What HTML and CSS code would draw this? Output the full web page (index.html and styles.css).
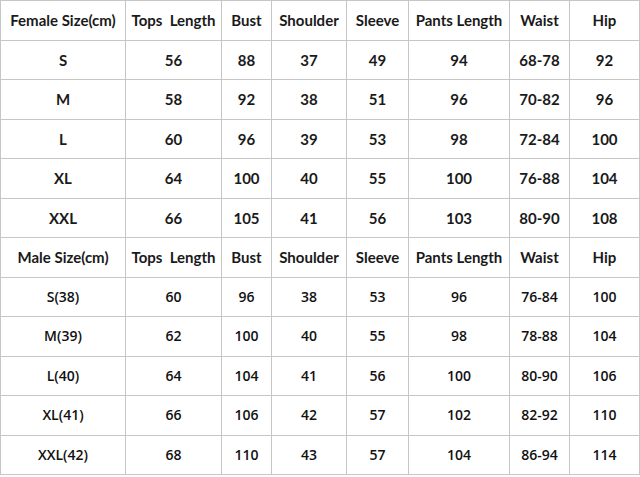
FILE: index.html
```html
<!DOCTYPE html>
<html>
<head>
<meta charset="utf-8">
<link rel="stylesheet" href="styles.css">
</head>
<body>
<table class="size-table">
  <colgroup>
    <col class="c1"><col class="c2"><col class="c3"><col class="c4"><col class="c5"><col class="c6"><col class="c7"><col class="c8">
  </colgroup>
  <tbody>
    <tr class="head"><td>Female Size(cm)</td><td>Tops&nbsp; Length</td><td>Bust</td><td>Shoulder</td><td>Sleeve</td><td>Pants Length</td><td>Waist</td><td>Hip</td></tr>
    <tr><td>S</td><td>56</td><td>88</td><td>37</td><td>49</td><td>94</td><td>68-78</td><td>92</td></tr>
    <tr><td>M</td><td>58</td><td>92</td><td>38</td><td>51</td><td>96</td><td>70-82</td><td>96</td></tr>
    <tr><td>L</td><td>60</td><td>96</td><td>39</td><td>53</td><td>98</td><td>72-84</td><td>100</td></tr>
    <tr><td>XL</td><td>64</td><td>100</td><td>40</td><td>55</td><td>100</td><td>76-88</td><td>104</td></tr>
    <tr><td>XXL</td><td>66</td><td>105</td><td>41</td><td>56</td><td>103</td><td>80-90</td><td>108</td></tr>
    <tr class="head"><td>Male Size(cm)</td><td>Tops&nbsp; Length</td><td>Bust</td><td>Shoulder</td><td>Sleeve</td><td>Pants Length</td><td>Waist</td><td>Hip</td></tr>
    <tr class="male"><td>S(38)</td><td>60</td><td>96</td><td>38</td><td>53</td><td>96</td><td>76-84</td><td>100</td></tr>
    <tr class="male"><td>M(39)</td><td>62</td><td>100</td><td>40</td><td>55</td><td>98</td><td>78-88</td><td>104</td></tr>
    <tr class="male"><td>L(40)</td><td>64</td><td>104</td><td>41</td><td>56</td><td>100</td><td>80-90</td><td>106</td></tr>
    <tr class="male"><td>XL(41)</td><td>66</td><td>106</td><td>42</td><td>57</td><td>102</td><td>82-92</td><td>110</td></tr>
    <tr class="male"><td>XXL(42)</td><td>68</td><td>110</td><td>43</td><td>57</td><td>104</td><td>86-94</td><td>114</td></tr>
  </tbody>
</table>
</body>
</html>
```
FILE: styles.css
```css
html, body {
  margin: 0;
  padding: 0;
  background: #ffffff;
}

.size-table {
  border-collapse: collapse;
  table-layout: fixed;
  width: 639px;
  font-family: Lato, "Open Sans", sans-serif;
  font-weight: 700;
  font-size: 15px;
  color: #1a1a1a;
}

.c1 { width: 125px; }
.c2 { width: 96px; }
.c3 { width: 50px; }
.c4 { width: 75px; }
.c5 { width: 62px; }
.c6 { width: 101px; }
.c7 { width: 60px; }
.c8 { width: 70px; }

.size-table td {
  border: 1px solid #c6c6c6;
  height: 38.5px;
  padding: 0;
  text-align: center;
  vertical-align: middle;
  white-space: nowrap;
  line-height: 18px;
}

.size-table tr.male td {
  font-family: "Open Sans", "Liberation Sans", sans-serif;
  font-weight: 600;
  font-size: 14px;
  color: #111111;
}
```
